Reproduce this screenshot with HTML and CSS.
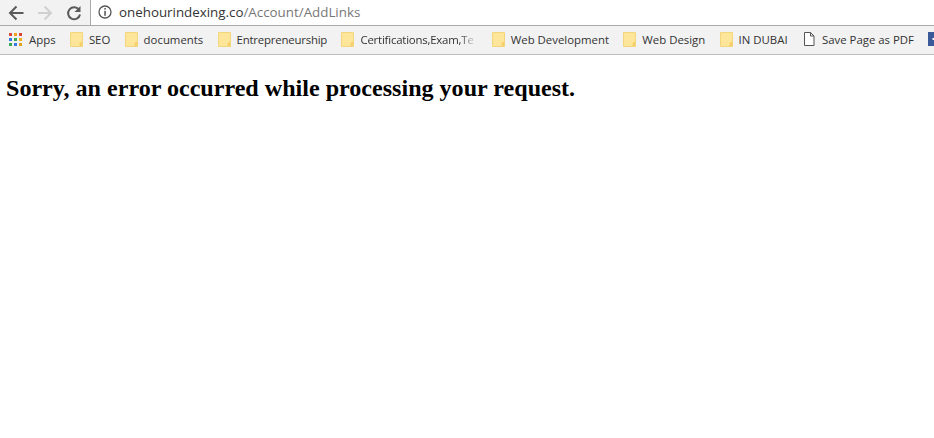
FILE: index.html
```html
<!DOCTYPE html>
<html lang="en">
<head>
<meta charset="utf-8">
<title>onehourindexing.co/Account/AddLinks</title>
<link rel="stylesheet" href="styles.css">
</head>
<body>
<svg class="defs" width="0" height="0">
  <symbol id="folder" viewBox="0 0 13 15">
    <path d="M.500.500H12.500V14.500H.500Z" fill="#fde69a" stroke="#f3d67c"/>
    <path d="M9.500 14V11L12 9.500V14Z" fill="#f6cf6a"/>
  </symbol>
</svg>
<header class="chrome">
  <div class="toolbar">
    <svg class="nav" width="18" height="18" viewBox="0 0 18 18"><path d="M16.500 9H4M9.500 2.500 3 9l6.500 6.500" fill="none" stroke="#5a5a5a" stroke-width="2"/></svg>
    <svg class="nav" width="18" height="18" viewBox="0 0 18 18"><path d="M2 9h12.500M8.500 2.500 15 9l-6.500 6.500" fill="none" stroke="#d0d0d0" stroke-width="2"/></svg>
    <svg class="nav" width="18" height="18" viewBox="0 0 18 18"><path d="M14 5.800A6 6 0 1 0 15 10.500" fill="none" stroke="#5a5a5a" stroke-width="2"/><path d="M15.500 2V8H9.500Z" fill="#5a5a5a"/></svg>
    <div class="omnibox">
      <svg width="14" height="14" viewBox="0 0 14 14"><circle cx="7" cy="7" r="6" fill="none" stroke="#555" stroke-width="1.300"/><rect x="6.300" y="3" width="1.500" height="1.600" fill="#555"/><rect x="6.300" y="5.800" width="1.500" height="5" fill="#555"/></svg>
      <span class="url">onehourindexing.co<span class="path">/Account/AddLinks</span></span>
    </div>
  </div>
  <nav class="bookmarks">
    <a class="mark apps">
      <svg class="icon" width="13" height="14" viewBox="0 0 13 14">
        <rect x="0" y="1" width="3" height="3" fill="#d9453a"/><rect x="5" y="1" width="3" height="3" fill="#f0a020"/><rect x="10" y="1" width="3" height="3" fill="#d9453a"/>
        <rect x="0" y="6" width="3" height="3" fill="#3b78e7"/><rect x="5" y="6" width="3" height="3" fill="#3aa757"/><rect x="10" y="6" width="3" height="3" fill="#f0b020"/>
        <rect x="0" y="11" width="3" height="3" fill="#3aa757"/><rect x="5" y="11" width="3" height="3" fill="#3b78e7"/><rect x="10" y="11" width="3" height="3" fill="#e0a020"/>
      </svg>Apps</a>
    <a class="mark"><svg class="folder" width="13" height="15"><use href="#folder"/></svg>SEO</a>
    <a class="mark"><svg class="folder" width="13" height="15"><use href="#folder"/></svg>documents</a>
    <a class="mark"><svg class="folder" width="13" height="15"><use href="#folder"/></svg><span class="tight">Entrepreneurship</span></a>
    <a class="mark"><svg class="folder" width="13" height="15"><use href="#folder"/></svg><span class="clip tight">Certifications,Exam,Te</span></a>
    <a class="mark"><svg class="folder" width="13" height="15"><use href="#folder"/></svg>Web Development</a>
    <a class="mark"><svg class="folder" width="13" height="15"><use href="#folder"/></svg>Web Design</a>
    <a class="mark"><svg class="folder" width="13" height="15"><use href="#folder"/></svg>IN DUBAI</a>
    <a class="mark page">
      <svg class="icon" width="12" height="14" viewBox="0 0 12 14"><path d="M1.500.500H7.500L11 4V13.500H1.500ZM7.500.500V4H11" fill="#fff" stroke="#555"/></svg>Save Page as PDF</a>
    <svg class="icon" width="14" height="14" viewBox="0 0 14 14"><rect width="14" height="14" fill="#3b5998"/><path d="M6 14V8H4.500V6H6V4.500Q6 3 8 3H9.500V5H8.500Q8 5 8 5.500V6H9.500L9.200 8H8V14Z" fill="#fff"/></svg>
  </nav>
</header>
<h2 class="message">Sorry, an error occurred while processing your request.</h2>
</body>
</html>
```
FILE: styles.css
```css
html, body {
  margin: 0;
  padding: 0;
  background: #fff;
  overflow: hidden;
}
.defs { display: block; }
.chrome {
  background: #f2f2f2;
  border-bottom: 1px solid #bdbdbd;
  height: 54px;
}
.toolbar {
  display: flex;
  align-items: center;
  height: 25px;
  padding-left: 7px;
  gap: 11px;
  overflow: hidden;
}
.nav { flex: none; }
.omnibox {
  flex: 1;
  display: flex;
  align-items: center;
  gap: 7px;
  height: 25px;
  margin-left: -4px;
  padding: 0 0 1px 7px;
  background: #fff;
  border-left: 1px solid #a9a9a9;
  box-sizing: border-box;
}
.url {
  font: 13.350px "Open Sans", sans-serif;
  color: #333;
}
.path { color: #777; }
.bookmarks {
  display: flex;
  align-items: center;
  height: 28px;
  box-sizing: border-box;
  padding: 0 0 1px 9px;
  gap: 14.300px;
  border-top: 1px solid #a9a9a9;
  overflow: hidden;
  white-space: nowrap;
}
.mark {
  display: flex;
  align-items: center;
  gap: 6px;
  font: 11.400px "Open Sans", sans-serif;
  color: #333;
}
.apps { gap: 7px; }
.page { gap: 7px; margin-left: 1px; }
.icon, .folder { flex: none; }
.tight { letter-spacing: -0.2px; }
.clip {
  display: block;
  width: 117px;
  -webkit-mask-image: linear-gradient(to right, #000 85%, transparent);
  mask-image: linear-gradient(to right, #000 85%, transparent);
}
.message {
  margin: 20px 0 0 6px;
  font: bold 24.080px "Liberation Serif", serif;
  color: #000;
}
```
